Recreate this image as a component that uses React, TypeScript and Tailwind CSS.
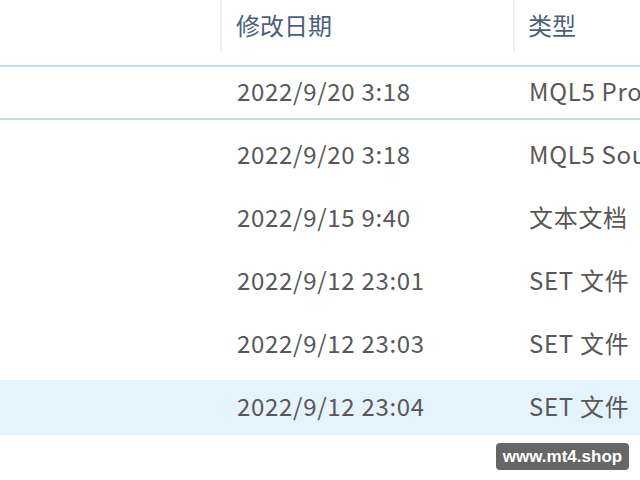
import React from "react";

const rows = [
  { date: "2022/9/20 3:18", type: "MQL5 Project", state: "focus" },
  { date: "2022/9/20 3:18", type: "MQL5 Source File", state: "" },
  { date: "2022/9/15 9:40", type: "文本文档", state: "" },
  { date: "2022/9/12 23:01", type: "SET 文件", state: "" },
  { date: "2022/9/12 23:03", type: "SET 文件", state: "" },
  { date: "2022/9/12 23:04", type: "SET 文件", state: "hover" },
];

export default function App() {
  return (
    <div
      className="relative w-[640px] h-[480px] overflow-hidden bg-white text-[24px] leading-none"
      style={{ fontFamily: '"Noto Sans CJK SC", "Noto Sans", sans-serif' }}
    >
      <div className="flex h-[53px] text-[#4c607a]">
        <div className="w-[222px] shrink-0 border-r-2 border-[#eef0f2]" />
        <div className="w-[293px] shrink-0 border-r-2 border-[#eef0f2] flex items-center pl-[14px] pb-[3px]">
          修改日期
        </div>
        <div className="flex-1 flex items-center pl-[13px] pb-[3px] whitespace-nowrap">类型</div>
      </div>
      <div className="mt-[12px] flex flex-col gap-[8px] text-[#585858] tracking-[0.7px]">
        {rows.map((r, i) => (
          <div
            key={i}
            className={
              "flex h-[55px] items-center pb-[4px] whitespace-nowrap " +
              (r.state === "focus"
                ? "border-y-2 border-[#c3dbec]"
                : r.state === "hover"
                ? "bg-[#e5f3fd]"
                : "")
            }
          >
            <div className="w-[222px] shrink-0" />
            <div className="w-[293px] shrink-0 pl-[15px]">{r.date}</div>
            <div className="pl-[14px]">{r.type}</div>
          </div>
        ))}
      </div>
      <div
        className="absolute left-[496px] top-[443px] w-[133px] h-[27px] rounded-[4px] bg-[#666666] text-white text-[17px] font-bold flex items-center justify-center"
        style={{ fontFamily: '"Liberation Sans", Arial, sans-serif' }}
      >
        www.mt4.shop
      </div>
    </div>
  );
}
